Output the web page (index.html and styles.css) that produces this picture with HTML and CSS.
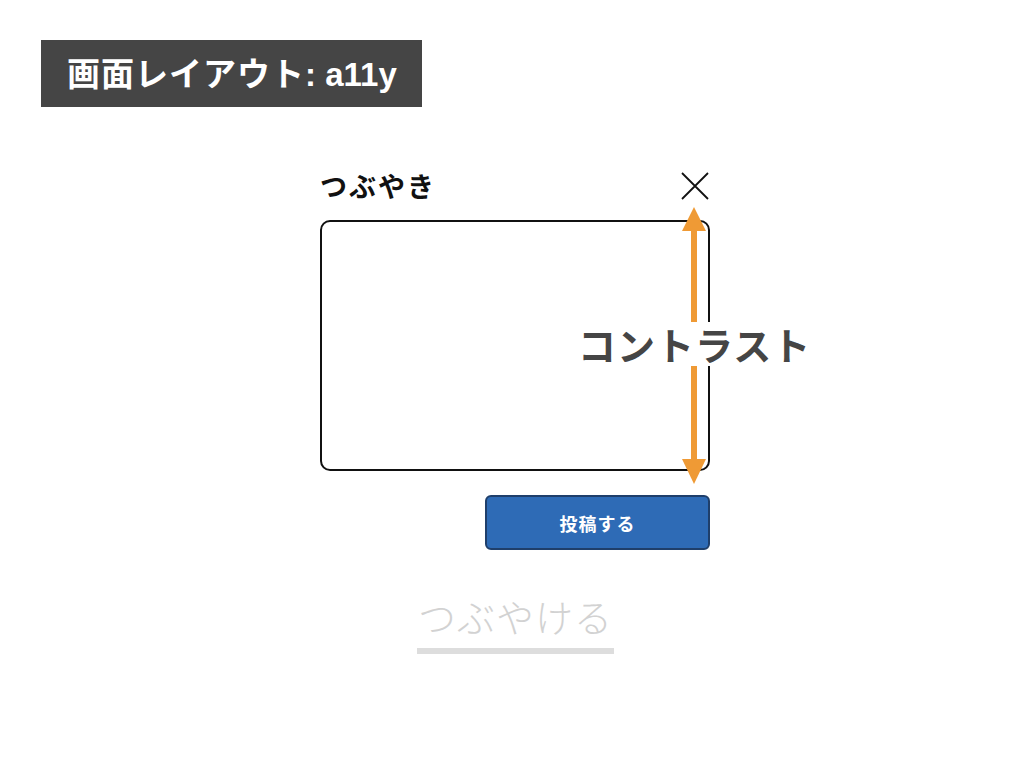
FILE: index.html
```html
<!DOCTYPE html>
<html lang="ja">
<head>
<meta charset="utf-8">
<title>画面レイアウト: a11y</title>
<link rel="stylesheet" href="styles.css">
</head>
<body>
<header class="banner"><span class="banner-text">画面レイアウト<span class="latin">: a11y</span></span></header>
<main class="dialog">
  <div class="dialog-head">
    <h1 class="dialog-title">つぶやき</h1>
    <button class="close" aria-label="閉じる">
      <svg width="28" height="28" viewBox="0 0 28 28"><path d="M1 1 L27 27 M27 1 L1 27" stroke="#111" stroke-width="1.8" fill="none"/></svg>
    </button>
  </div>
  <div class="textbox"></div>
  <div class="actions"><button class="post">投稿する</button></div>
  <div class="annotation">
    <svg class="arrow" width="26" height="277" viewBox="0 0 26 277">
      <rect x="10" y="20" width="6" height="237" fill="#ef9a35"/>
      <polygon points="13,0 25,24 1,24" fill="#ef9a35"/>
      <polygon points="13,277 25,252 1,252" fill="#ef9a35"/>
    </svg>
    <span class="label">コントラスト</span>
  </div>
</main>
<div class="hint"><span class="hint-text">つぶやける</span></div>
</body>
</html>
```
FILE: styles.css
```css
* { box-sizing: border-box; }
body {
  margin: 0;
  background: #fff;
  font-family: "Noto Sans CJK JP", "Noto Sans", sans-serif;
  color: #111;
}
.banner {
  margin: 40px 0 0 41px;
  width: 381px;
  height: 67px;
  background: #454545;
  display: flex;
  align-items: center;
  padding-left: 26px;
}
.banner-text {
  color: #fff;
  font-size: 33px;
  font-weight: 700;
  letter-spacing: 1px;
  line-height: 1;
}
.latin {
  font-family: "Liberation Sans", Arial, sans-serif;
  letter-spacing: 0;
}
.dialog {
  position: relative;
  margin: 64px 0 0 320px;
  width: 390px;
}
.dialog-head {
  display: flex;
  justify-content: space-between;
  align-items: center;
  height: 30px;
}
.dialog-title {
  margin: 0;
  font-size: 27px;
  font-weight: 700;
  letter-spacing: 2px;
  line-height: 30px;
}
.close {
  border: 0;
  background: none;
  padding: 0;
  margin-right: 1px;
  width: 28px;
  height: 28px;
  display: flex;
}
.textbox {
  margin-top: 19px;
  height: 251px;
  border: 2px solid #111;
  border-radius: 10px;
}
.actions {
  margin-top: 24px;
  display: flex;
  justify-content: flex-end;
}
.post {
  width: 225px;
  height: 55px;
  background: #2e6bb6;
  border: 2px solid #1f3f6b;
  border-radius: 6px;
  color: #fff;
  font-family: "Noto Sans CJK JP", sans-serif;
  font-size: 18px;
  font-weight: 700;
  letter-spacing: 1px;
}
.annotation {
  position: absolute;
  left: 0;
  top: 0;
  width: 100%;
  height: 100%;
  pointer-events: none;
}
.arrow {
  position: absolute;
  left: 361px;
  top: 36px;
}
.label {
  position: absolute;
  left: 256px;
  top: 151px;
  height: 44px;
  line-height: 44px;
  padding: 0 2px;
  background: #fff;
  color: #454545;
  font-size: 38px;
  font-weight: 700;
  letter-spacing: 1px;
  white-space: nowrap;
}
.hint {
  margin: 44px 0 0 417px;
  width: 197px;
  border-bottom: 6px solid #dddddd;
  text-align: center;
  padding-bottom: 10px;
}
.hint-text {
  font-size: 38px;
  font-weight: 300;
  color: #d2d2d2;
  line-height: 44px;
  letter-spacing: 1px;
}
```
